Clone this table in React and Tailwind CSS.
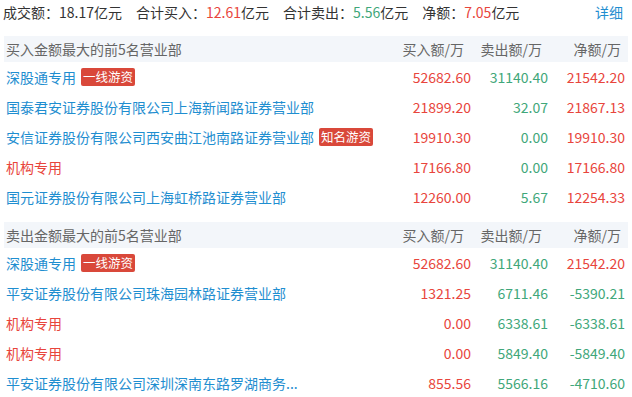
const buyRows = [
  { name: '深股通专用', tag: '一线游资', buy: '52682.60', sell: '31140.40', net: '21542.20', up: true, color: 'blue' },
  { name: '国泰君安证券股份有限公司上海新闻路证券营业部', buy: '21899.20', sell: '32.07', net: '21867.13', up: true, color: 'blue' },
  { name: '安信证券股份有限公司西安曲江池南路证券营业部', tag: '知名游资', buy: '19910.30', sell: '0.00', net: '19910.30', up: true, color: 'blue' },
  { name: '机构专用', buy: '17166.80', sell: '0.00', net: '17166.80', up: true, color: 'red' },
  { name: '国元证券股份有限公司上海虹桥路证券营业部', buy: '12260.00', sell: '5.67', net: '12254.33', up: true, color: 'blue' }
]

const sellRows = [
  { name: '深股通专用', tag: '一线游资', buy: '52682.60', sell: '31140.40', net: '21542.20', up: true, color: 'blue' },
  { name: '平安证券股份有限公司珠海园林路证券营业部', buy: '1321.25', sell: '6711.46', net: '-5390.21', up: false, color: 'blue' },
  { name: '机构专用', buy: '0.00', sell: '6338.61', net: '-6338.61', up: false, color: 'red' },
  { name: '机构专用', buy: '0.00', sell: '5849.40', net: '-5849.40', up: false, color: 'red' },
  { name: '平安证券股份有限公司深圳深南东路罗湖商务...', buy: '855.56', sell: '5566.16', net: '-4710.60', up: false, color: 'blue' }
]

function Section({ title, rows }) {
  return (
    <div className="mx-1">
      <div className="flex items-center h-[26px] bg-[#f3f6fa] text-[#666] pl-[2px] pr-[3px]">
        <div className="flex-1">{title}</div>
        <div className="w-[77px] text-right pr-[7px]">买入额/万</div>
        <div className="w-[77px] text-right pr-[6px]">卖出额/万</div>
        <div className="w-[77px] text-right pr-[4px]">净额/万</div>
      </div>
      {rows.map((r, i) => (
        <div key={i} className="flex items-center h-[30px] pl-[2px] pr-[3px]">
          <div className="flex-1 flex items-center min-w-0">
            <span className={r.color === 'red' ? 'text-[#e8453c]' : 'text-[#1f8ed0]'}>{r.name}</span>
            {r.tag && (
              <span className="ml-[5px] px-[2px] h-[18px] leading-[18px] text-[12.5px] text-white bg-[#d9483a] rounded-[2px]">
                {r.tag}
              </span>
            )}
          </div>
          <div className="w-[77px] text-right text-[#e8453c]">{r.buy}</div>
          <div className="w-[77px] text-right text-[#3fa77a]">{r.sell}</div>
          <div className={`w-[77px] text-right ${r.up ? 'text-[#e8453c]' : 'text-[#3fa77a]'}`}>{r.net}</div>
        </div>
      ))}
    </div>
  )
}

export default function App() {
  return (
    <div
      className="w-[632px] h-[397px] bg-white text-[14px] overflow-hidden"
      style={{ fontFamily: '"Microsoft YaHei", "Noto Sans CJK SC", "Noto Sans", sans-serif' }}
    >
      <div className="flex items-center h-[24px] pl-[3px] pr-[9px] text-[#333]">
        <span>成交额：18.17亿元</span>
        <span className="ml-[14px]">合计买入：<span className="text-[#e8453c]">12.61</span>亿元</span>
        <span className="ml-[14px]">合计卖出：<span className="text-[#3fa77a]">5.56</span>亿元</span>
        <span className="ml-[14px]">净额：<span className="text-[#e8453c]">7.05</span>亿元</span>
        <span className="ml-auto text-[#1f8ed0]">详细</span>
      </div>
      <div className="mt-[12px]">
        <Section title="买入金额最大的前5名营业部" rows={buyRows} />
      </div>
      <div className="mt-[10px]">
        <Section title="卖出金额最大的前5名营业部" rows={sellRows} />
      </div>
    </div>
  )
}
